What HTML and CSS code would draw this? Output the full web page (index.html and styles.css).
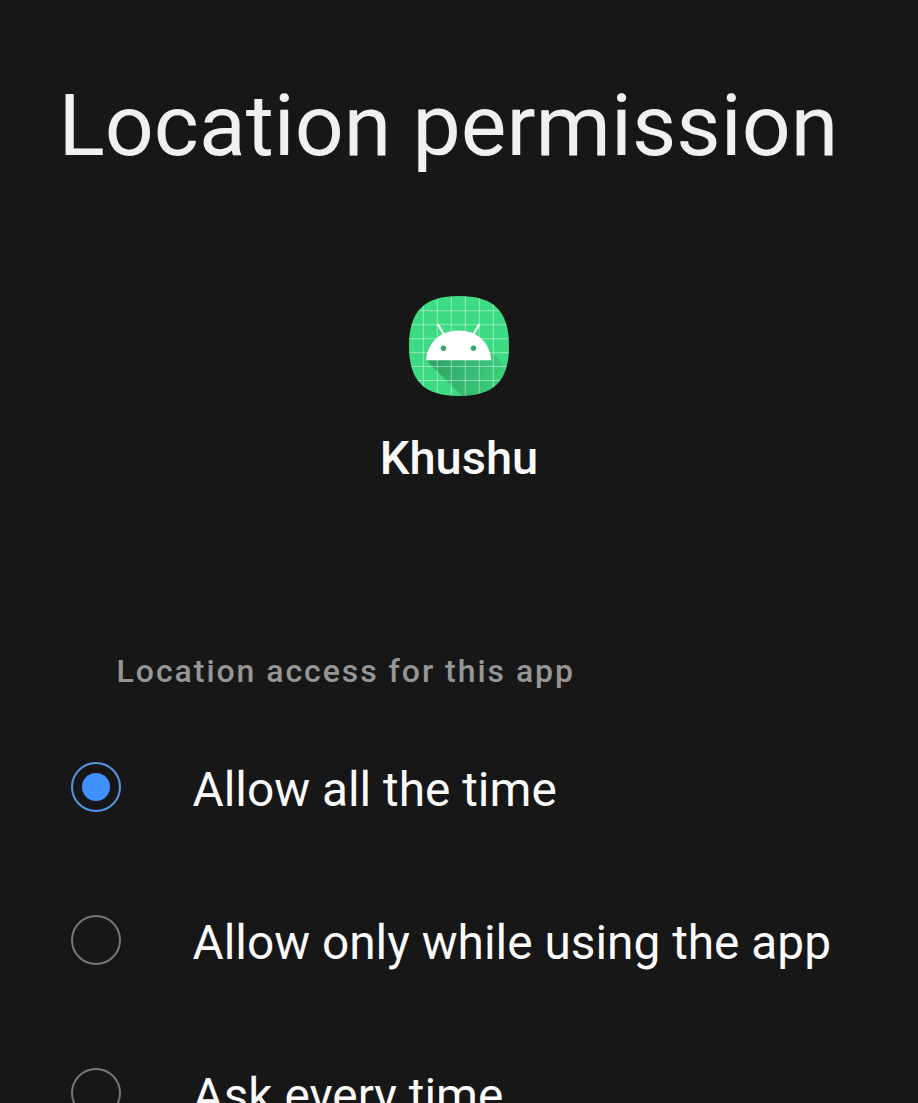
FILE: index.html
```html
<!DOCTYPE html>
<html lang="en">
<head>
<meta charset="utf-8">
<title>Location permission</title>
<link rel="stylesheet" href="styles.css">
</head>
<body>
<main class="screen">
  <h1 class="title">Location permission</h1>
  <section class="app">
    <svg class="app-icon" viewBox="0 0 100 100">
      <defs>
        <clipPath id="shape"><path d="M50 0C85 0 100 15 100 50S85 100 50 100 0 85 0 50 15 0 50 0Z"/></clipPath>
        <linearGradient id="shade" gradientUnits="userSpaceOnUse" x1="30" y1="60" x2="92" y2="84">
          <stop offset="0" stop-color="#1c5c3c" stop-opacity=".42"/>
          <stop offset="1" stop-color="#1c5c3c" stop-opacity=".1"/>
        </linearGradient>
      </defs>
      <g clip-path="url(#shape)">
        <rect width="100" height="100" fill="#3ddc84"/>
        <path d="M17 64L53 100H100V74L78 51Z" fill="url(#shade)"/>
        <path d="M14.3 0V100M28.3 0V100M42.3 0V100M56.3 0V100M70.3 0V100M84.3 0V100M0 14.7H100M0 28.7H100M0 42.7H100M0 56.7H100M0 70.5H100M0 84.5H100" stroke="#fff" stroke-opacity=".48" stroke-width=".9"/>
      </g>
      <path d="M17 64.3C18.5 46 32 34.5 49.7 34.5S81 46 82.3 64.3Z" fill="#fff"/>
      <path d="M29.2 28.8L36 40.5M70 28.8L63.2 40.5" stroke="#fff" stroke-width="2.2" stroke-linecap="round"/>
      <circle cx="34.5" cy="52.3" r="2.7" fill="#36a56e"/><circle cx="64.5" cy="52.3" r="2.7" fill="#36a56e"/>
    </svg>
    <div class="app-name">Khushu</div>
  </section>
  <h2 class="subtitle">Location access for this app</h2>
  <div class="options">
    <div class="option"><span class="radio radio-on"></span><span class="label">Allow all the time</span></div>
    <div class="option"><span class="radio"></span><span class="label">Allow only while using the app</span></div>
    <div class="option"><span class="radio"></span><span class="label">Ask every time</span></div>
  </div>
</main>
</body>
</html>
```
FILE: styles.css
```css
* { box-sizing: border-box; }
body { margin: 0; background: #171717; color: #fafafa; font-family: Roboto, sans-serif; }
.screen { height: 1103px; overflow: hidden; }
.title { margin: 0; padding: 75px 0 0 58.5px; font-size: 86px; line-height: 102px; font-weight: 400; color: #f0f0f1; white-space: nowrap; }
.app { display: flex; flex-direction: column; align-items: center; padding-top: 119px; }
.app-icon { width: 100px; height: 100px; display: block; }
.app-name { margin-top: 34px; font-size: 47px; line-height: 56px; font-weight: 500; }
.subtitle { margin: 0; padding: 165px 0 0 116.6px; font-size: 32px; line-height: 40px; font-weight: 500; letter-spacing: 1.95px; color: #969696; }
.options { padding-top: 19px; }
.option { height: 153px; display: flex; align-items: center; padding-left: 71px; }
.radio { width: 50px; height: 50px; border: 2px solid #777; border-radius: 50%; margin-right: 71.5px; display: grid; place-items: center; }
.radio-on { border-color: #5595e8; }
.radio-on::after { content: ""; width: 28px; height: 28px; border-radius: 50%; background: #4190ff; }
.label { padding-top: 6px; font-size: 47.8px; line-height: 56px; white-space: nowrap; }
```
